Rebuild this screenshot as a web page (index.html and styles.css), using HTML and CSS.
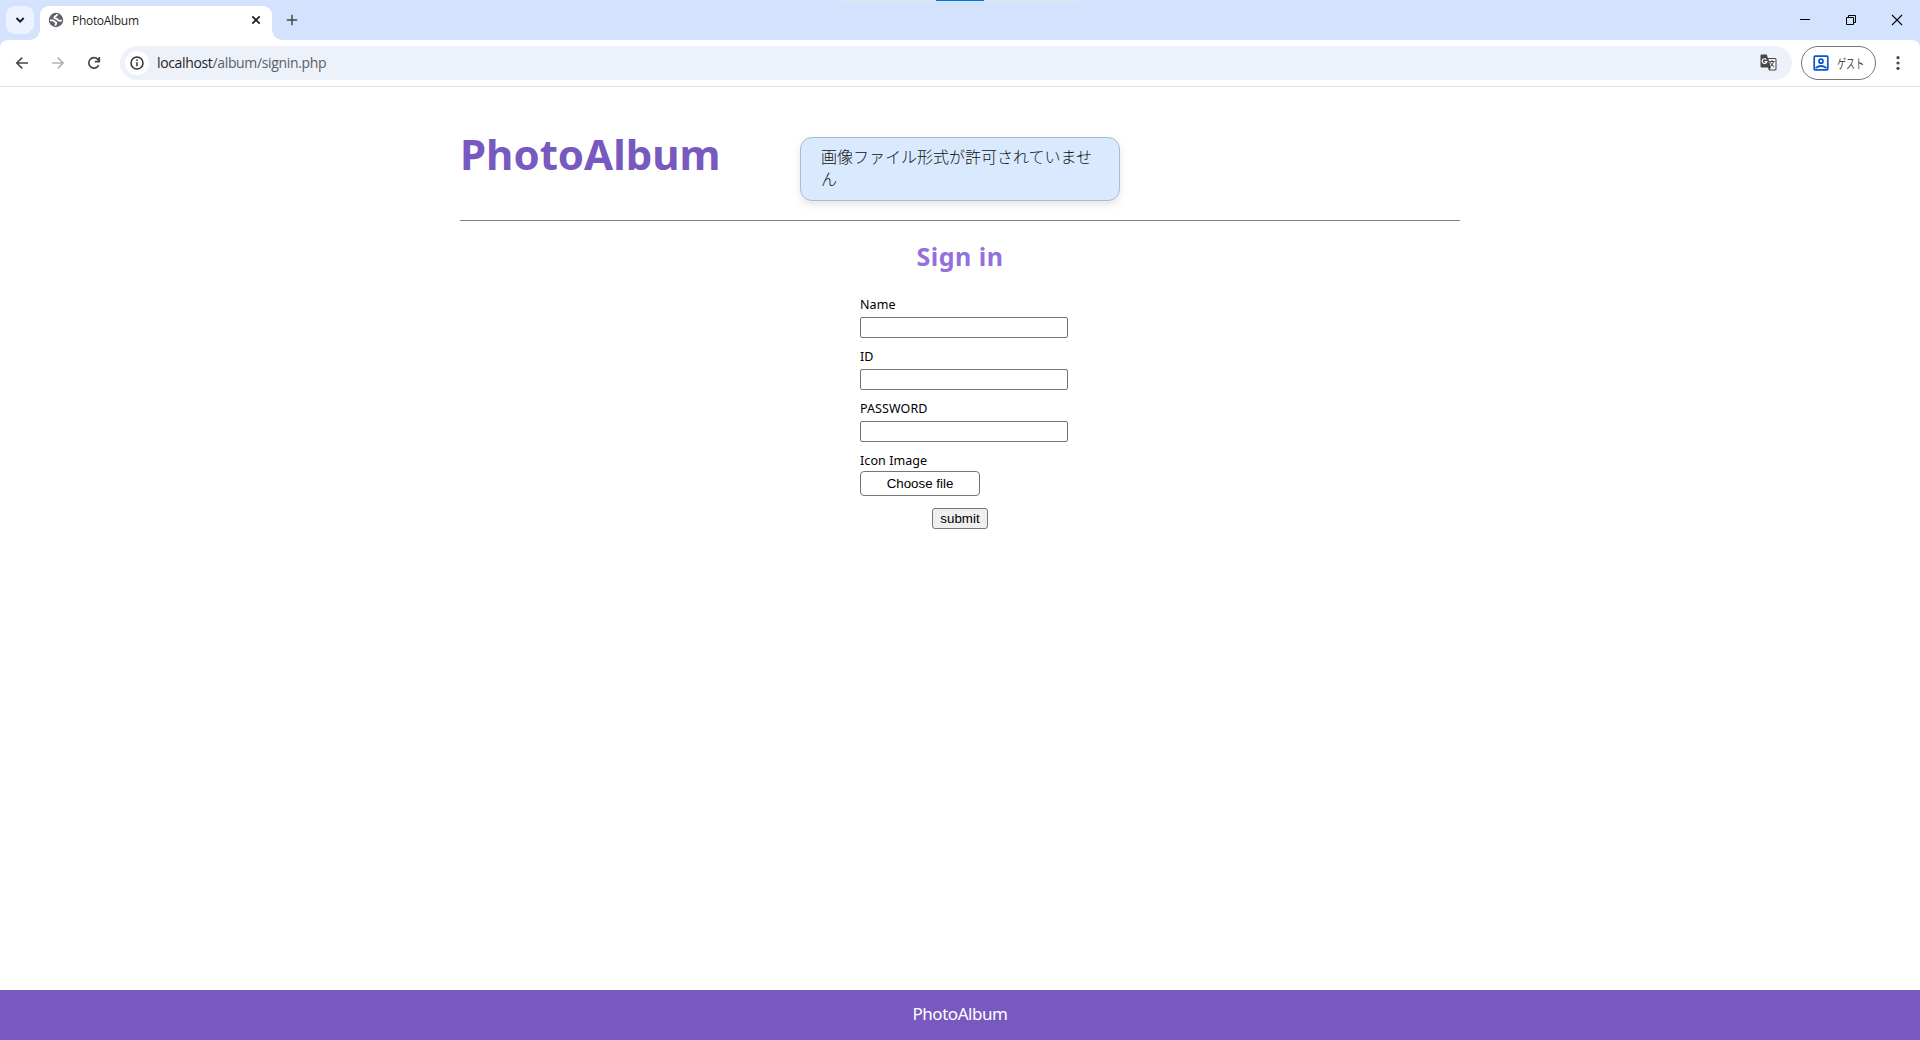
FILE: index.html
```html
<!DOCTYPE html>
<html lang="ja">
<head>
<meta charset="utf-8">
<title>PhotoAlbum</title>
<link rel="stylesheet" href="styles.css">
</head>
<body>
<div class="browser">
  <div class="tabstrip">
    <div class="tab-search"><svg width="28" height="28" viewBox="0 0 28 28" fill="none" stroke="#1f1f1f" stroke-width="2"><path d="M10.500 12l3.600 3.600 3.600-3.600"/></svg></div>
    <div class="tab">
      <svg class="globe" width="16" height="16" viewBox="0 0 16 16"><circle cx="8" cy="8" r="7.200" fill="#5f6368"/><path d="M9.200 2.200C9.400 4.500 6.400 3.800 6.300 5.500c0 1.700 3.200.5 3.500 2.300.2 1.100 1.900 1 4 .9M2 8.400h2.700c1.700 0 1.300 1.600 2.900 1.800 1.700.3-.2 1.700-.1 3.500" fill="none" stroke="#fff" stroke-width="1.800"/></svg>
      <span class="tab-title">PhotoAlbum</span>
      <svg class="tab-close" width="10" height="10" viewBox="0 0 10 10" stroke="#1f1f1f" stroke-width="1.700"><path d="M1.300 1.300l7.400 7.400M8.700 1.300L1.300 8.700"/></svg>
    </div>
    <svg class="new-tab" width="12" height="12" viewBox="0 0 12 12" stroke="#474747" stroke-width="1.500"><path d="M6 .8v10.400M.8 6h10.400"/></svg>
    <div class="window-buttons">
      <svg width="12" height="12" viewBox="0 0 12 12" stroke="#000"><path d="M1 5.500h10"/></svg>
      <svg width="12" height="12" viewBox="0 0 12 12" fill="none" stroke="#000"><path d="M1.500 3.500h7v7h-7zM3.500 3.500v-2h7v7h-2"/></svg>
      <svg width="12" height="12" viewBox="0 0 12 12" stroke="#000" stroke-width="1.100"><path d="M1 1l10 10M11 1L1 11"/></svg>
    </div>
    <div class="capture-bar"><span></span></div>
  </div>
  <div class="toolbar">
    <div class="nav">
      <svg width="16" height="16" viewBox="0 0 16 16" fill="none" stroke="#474747" stroke-width="1.600"><path d="M14 8H3M8.200 2.600L2.800 8l5.400 5.400"/></svg>
      <svg width="16" height="16" viewBox="0 0 16 16" fill="none" stroke="#b2b2b2" stroke-width="1.600"><path d="M2 8h11M7.800 2.600L13.200 8l-5.400 5.400"/></svg>
      <svg width="16" height="16" viewBox="0 0 16 16" fill="none" stroke="#474747" stroke-width="1.700"><path d="M12.700 10.100A5.200 5.200 0 1 1 11.900 4.400L13.200 6M13.300 2v4.700H8.700"/></svg>
    </div>
    <div class="address">
      <div class="site-info"><svg width="16" height="16" viewBox="0 0 16 16" fill="none" stroke="#303134" stroke-width="1.500"><circle cx="8" cy="8" r="6"/><path d="M8 7.200v4M8 4.500v1.600"/></svg></div>
      <span class="url"><b>localhost</b>/album/signin.php</span>
      <svg class="translate" width="17" height="17" viewBox="0 0 17 17"><path d="M1.500.5h5.300L7.900 4H15q1.500 0 1.500 1.500v9.500q0 1.500-1.500 1.500H9L7.900 13.500H1.700Q.5 13.500.5 12.200V1.800Q.5.500 1.500.500z" fill="#474747"/><path d="M8.400 5h6.400q.7 0 .7.700v9q0 .8-.8.800H9.800l1.100-2z" fill="#edf1fa"/><path d="M6.400 5.600A2.400 2.400 0 1 0 6.900 7.700H4.600" fill="none" stroke="#fff" stroke-width="1.200"/><path d="M9.200 7.500h5.500M12 6.200v1.300M13.500 7.500c-.5 2-1.400 3.500-2.900 4.800M10.500 8.500c.7 1.900 1.900 3.200 3.700 4.400" fill="none" stroke="#474747"/></svg>
    </div>
    <div class="profile">
      <svg width="16" height="16" viewBox="0 0 16 16" fill="none" stroke="#0b57d0" stroke-width="1.700"><rect x="1.200" y="1.200" width="13.600" height="13.600" rx=".8"/><circle cx="8" cy="6.200" r="2"/><path d="M2.500 13.200q5.500-4.400 11 0"/></svg>
      <span>ゲスト</span>
    </div>
    <svg class="menu" width="4" height="16" viewBox="0 0 4 16" fill="#474747"><circle cx="2" cy="2.700" r="1.600"/><circle cx="2" cy="8" r="1.600"/><circle cx="2" cy="13.300" r="1.600"/></svg>
  </div>
</div>
<div class="page">
  <header class="header">
    <h1>PhotoAlbum</h1>
    <div class="flash">画像ファイル形式が許可されていません</div>
  </header>
  <main class="content">
    <h2>Sign in</h2>
    <form class="form">
      <label>Name<input type="text"></label>
      <label>ID<input type="text"></label>
      <label>PASSWORD<input type="password"></label>
      <div class="upload"><span>Icon Image</span><button type="button" class="choose">Choose file</button></div>
    </form>
    <button type="button" class="submit">submit</button>
  </main>
</div>
<footer class="footer"><span>PhotoAlbum</span></footer>
</body>
</html>
```
FILE: styles.css
```css
* { box-sizing: border-box; }
body {
  margin: 0;
  height: 1040px;
  display: flex;
  flex-direction: column;
  overflow: hidden;
  background: #fff;
  font-family: "Noto Sans", "Noto Sans CJK JP", sans-serif;
}
svg { display: block; flex: none; }
.browser { height: 87px; flex: none; background: #d3e3fd; }
.tabstrip { position: relative; height: 40px; display: flex; align-items: center; padding: 0 17px 0 6px; }
.tab-search { width: 28px; height: 28px; border-radius: 9px; background: #ecf2fe; }
.tab {
  position: relative;
  align-self: flex-end;
  width: 232px;
  height: 34px;
  margin-left: 6px;
  padding: 0 11px 6px 8px;
  display: flex;
  align-items: center;
  border-radius: 9px 9px 0 0;
  background: #fff;
}
.tab::before, .tab::after { content: ""; position: absolute; bottom: 0; width: 10px; height: 10px; }
.tab::before { left: -10px; background: radial-gradient(circle at 0 0, #d3e3fd 9.5px, #fff 10px); }
.tab::after { right: -10px; background: radial-gradient(circle at 100% 0, #d3e3fd 9.5px, #fff 10px); }
.tab-title { margin: 2px 0 0 8px; flex: 1; font: 12px/16px "Open Sans", sans-serif; color: #1f1f1f; letter-spacing: -.3px; }
.new-tab { margin-left: 14px; }
.window-buttons { margin-left: auto; display: flex; gap: 34px; }
.capture-bar { position: absolute; left: 840px; top: 0; width: 241px; height: 1px; padding-left: 96px; background: #e5e5e5; }
.capture-bar span { display: block; width: 48px; height: 1px; background: #0078d7; }
.toolbar {
  height: 47px;
  display: flex;
  align-items: center;
  padding: 0 20px 1px 14px;
  background: #fff;
  border-bottom: 1px solid #dfe1e3;
  border-radius: 8px 8px 0 0;
}
.nav { display: flex; gap: 20px; }
.address {
  flex: 1;
  height: 34px;
  margin-left: 18px;
  padding: 0 15px 0 5px;
  display: flex;
  align-items: center;
  border-radius: 17px;
  background: #edf1fa;
}
.site-info { width: 24px; height: 24px; display: grid; place-items: center; border-radius: 50%; background: #fff; }
.url { flex: 1; margin-left: 8px; font: 14px/20px "Open Sans", sans-serif; color: #5b5e63; letter-spacing: -.35px; }
.url b { font-weight: 400; color: #1f1f1f; }
.profile {
  width: 75px;
  height: 34px;
  margin: 0 20px 0 9px;
  padding-left: 11px;
  display: flex;
  align-items: center;
  gap: 8px;
  border: 1px solid #747775;
  border-radius: 17px;
  font: 13px/16px "Noto Sans CJK JP", sans-serif;
  color: #474747;
}
.profile span { display: block; flex: none; white-space: nowrap; transform: scaleX(.7); transform-origin: left; }
.page { flex: 1; width: 1000px; margin: 0 auto; }
.header { position: relative; height: 134px; border-bottom: 1px solid #808080; }
h1 { margin: 0; padding-top: 37px; font-size: 42px; line-height: 60px; color: #7759bf; }
.flash {
  position: absolute;
  left: 340px;
  top: 50px;
  width: 320px;
  height: 64px;
  padding: 7px 20px 8px;
  border: 1px solid #a9bbd1;
  border-radius: 12px;
  background: #d9eaff;
  box-shadow: 0 4px 8px rgba(0, 0, 0, .1);
  font: 300 16px/22px "Noto Sans CJK JP", sans-serif;
  color: #111;
}
.content { display: flex; flex-direction: column; align-items: center; }
h2 { margin: 17px 0 22px; font-size: 25px; line-height: 36px; letter-spacing: .5px; color: #9370db; }
.form { width: 200px; font-size: 12.5px; line-height: 18px; letter-spacing: .08px; color: #000; }
.form label { display: block; height: 52px; }
.form input { display: block; width: 208px; height: 21px; margin: 3px 0 0; border: 1px solid #767676; border-radius: 2px; background: #fff; }
.upload span { display: block; }
.choose, .submit { display: block; padding: 0; font: 13.333px/15px "Liberation Sans", sans-serif; color: #000; }
.choose { width: 120px; height: 25px; margin-top: 1px; border: 1px solid #767676; border-radius: 4px; background: #fff; }
.submit { width: 56px; height: 21px; margin-top: 12px; border: 1px solid #767676; border-radius: 3px; background: #efefef; }
.footer { height: 50px; flex: none; display: grid; place-items: center; padding-bottom: 2px; background: #7759bf; color: #fff; font-size: 17px; line-height: 24px; letter-spacing: -.45px; }
```
